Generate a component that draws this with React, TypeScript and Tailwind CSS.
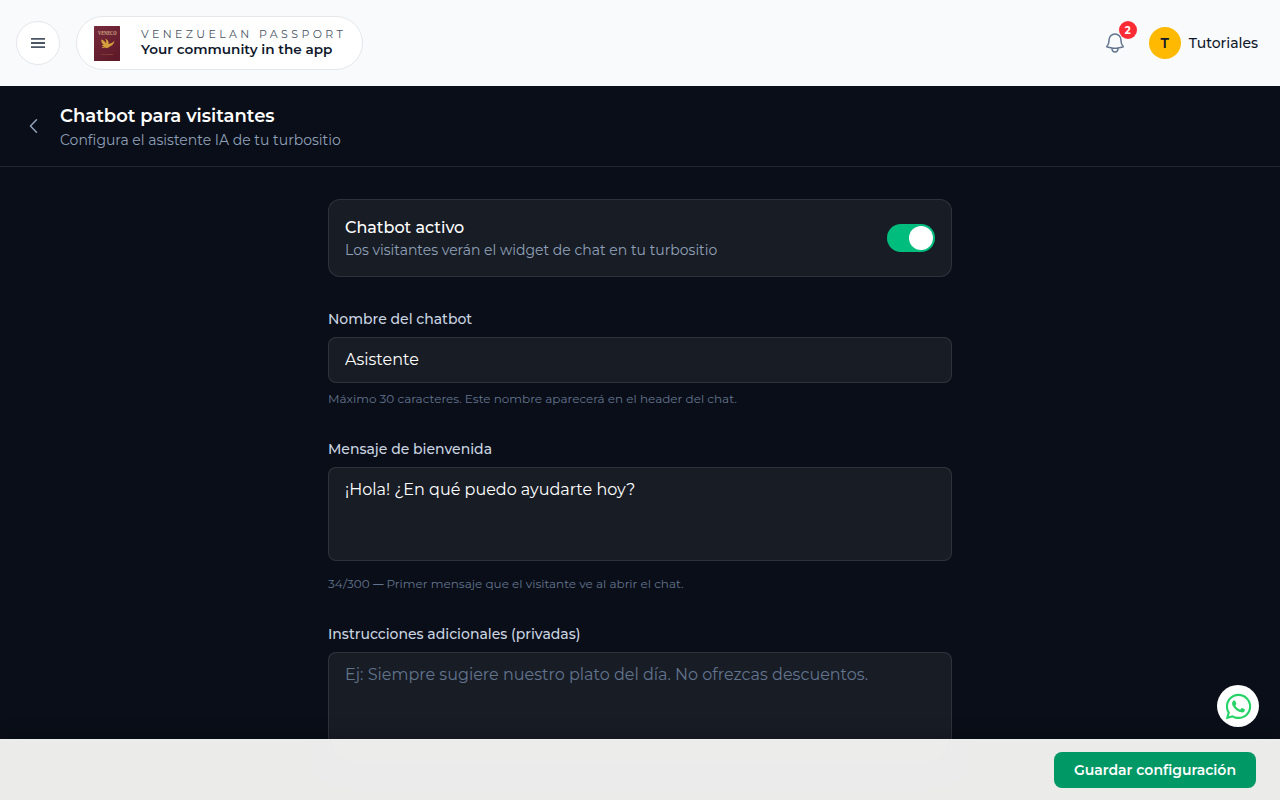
import React, { useState } from 'react';
import { FaWhatsapp } from 'react-icons/fa';

const inputClass =
  'block w-full rounded-lg border border-white/10 bg-white/[0.06] px-4 text-base text-white placeholder:text-slate-500 outline-none focus:border-emerald-500';

const PassportLogo: React.FC = () => (
  <svg viewBox="0 0 26 35" className="h-[35px] w-[26px]">
    <defs>
      <linearGradient id="cover" x1="0" y1="0" x2="0.6" y2="1">
        <stop offset="0" stopColor="#772b3d" />
        <stop offset="1" stopColor="#5f1a29" />
      </linearGradient>
    </defs>
    <rect width="26" height="35" rx="0.5" fill="url(#cover)" />
    <text x="13.3" y="8.6" textAnchor="middle" fontSize="5.4" fontWeight="700" textLength="18.5" lengthAdjust="spacingAndGlyphs" fill="#d4ad86" fontFamily="Liberation Serif, serif">
      VENECO
    </text>
    <path
      d="M7.2 13.4c2.300.5 4 1.900 4.800 4 .5-1.800.2-3.400-.8-5 2.600 1.200 3.800 3.100 3.400 5.600 2.200-.1 4.200-1.300 6-3.400-.6 3.100-2.400 5.200-5.200 6.100-1.200 1.200-2.800 1.500-4.800.9-1.300.4-2.400.4-3.200-.2 1.200-.2 2-.6 2.600-1.200-1.100-.1-1.900-.5-2.400-1.300h2.200c-1.700-1.300-2.600-3.100-2.600-5.500z"
      fill="#d5a03c"
    />
    <text x="13.2" y="29.3" textAnchor="middle" fontSize="2.8" fontWeight="700" textLength="12" lengthAdjust="spacingAndGlyphs" fill="#b07a45" fontFamily="Liberation Serif, serif">
      PASAPORTE
    </text>
  </svg>
);

const TopBar: React.FC = () => (
  <header className="flex h-[86px] shrink-0 items-center justify-between bg-[#f9fafc] pl-4 pr-[22px]">
    <div className="flex items-center gap-4">
      <button className="flex h-11 w-11 items-center justify-center rounded-full border border-gray-200 bg-white text-gray-600">
        <svg width="14" height="12" viewBox="0 0 14 12" stroke="currentColor" strokeWidth="1.9">
          <path d="M0 1.900h14M0 6h14M0 10.100h14" />
        </svg>
      </button>
      <div className="flex h-[54px] w-[287px] items-center gap-4 rounded-full border border-gray-200 bg-white pl-3">
        <div className="flex h-9 w-9 items-center justify-center">
          <PassportLogo />
        </div>
        <div className="flex flex-col whitespace-nowrap pb-0.5">
          <span className="text-[11px] leading-[15px] tracking-[3.4px] text-gray-600">VENEZUELAN PASSPORT</span>
          <span className="text-[13.6px] font-semibold leading-[15px] text-slate-900">Your community in the app</span>
        </div>
      </div>
    </div>

    <div className="flex items-center">
      <button className="relative mr-[22px] text-slate-500">
        <svg className="h-6 w-6" fill="none" viewBox="0 0 24 24" stroke="currentColor" strokeWidth="1.5" strokeLinecap="round" strokeLinejoin="round">
          <path d="M14.857 17.082a23.848 23.848 0 0 0 5.454-1.31A8.967 8.967 0 0 1 18 9.75V9A6 6 0 0 0 6 9v.75a8.967 8.967 0 0 1-2.312 6.022c1.733.64 3.56 1.085 5.455 1.31m5.714 0a24.255 24.255 0 0 1-5.714 0m5.714 0a3 3 0 1 1-5.714 0" />
        </svg>
        <span className="absolute -right-2.5 -top-2.5 flex h-[18px] w-[18px] items-center justify-center rounded-full bg-red-500 pt-px text-[10px] font-bold leading-none text-white">
          2
        </span>
      </button>
      <div className="flex h-8 w-8 items-center justify-center rounded-full bg-amber-400 text-sm font-semibold text-slate-900">T</div>
      <span className="ml-2 text-sm font-medium text-slate-900">Tutoriales</span>
    </div>
  </header>
);

const App: React.FC = () => {
  const [active, setActive] = useState(true);
  const [name, setName] = useState('Asistente');
  const [welcome, setWelcome] = useState('¡Hola! ¿En qué puedo ayudarte hoy?');
  const [instructions, setInstructions] = useState('');

  return (
    <div className="flex h-screen flex-col overflow-hidden bg-[#0a0e18] font-['Montserrat','Inter',sans-serif]">
      <TopBar />

      <div className="flex shrink-0 items-center gap-4 border-b border-white/10 px-6 py-4">
        <button className="text-slate-400">
          <svg className="h-5 w-5" fill="none" viewBox="0 0 24 24" stroke="currentColor" strokeWidth="1.8" strokeLinecap="round" strokeLinejoin="round">
            <path d="M15 19.5 7.75 12l7.25-7.5" />
          </svg>
        </button>
        <div>
          <h1 className="text-lg font-semibold text-white">Chatbot para visitantes</h1>
          <p className="text-sm text-slate-400">Configura el asistente IA de tu turbositio</p>
        </div>
      </div>

      <main className="mx-auto w-full max-w-2xl space-y-8 px-6 pt-8">
        <div className="flex items-center justify-between rounded-xl border border-white/10 bg-white/[0.06] p-4">
          <div>
            <p className="text-base font-medium text-white">Chatbot activo</p>
            <p className="text-sm text-slate-400">Los visitantes verán el widget de chat en tu turbositio</p>
          </div>
          <button
            onClick={() => setActive(!active)}
            className={`flex h-7 w-12 items-center rounded-full px-0.5 ${active ? 'justify-end bg-emerald-500' : 'justify-start bg-slate-600'}`}
          >
            <span className="h-6 w-6 rounded-full bg-white" />
          </button>
        </div>

        <div>
          <label className="mb-2 block text-sm font-medium text-slate-300">Nombre del chatbot</label>
          <input className={`${inputClass} h-[46px] pb-[11px] pt-[9px]`} maxLength={30} value={name} onChange={(e) => setName(e.target.value)} />
          <p className="mt-2 text-xs text-slate-500">Máximo 30 caracteres. Este nombre aparecerá en el header del chat.</p>
        </div>

        <div>
          <label className="mb-2 block text-sm font-medium text-slate-300">Mensaje de bienvenida</label>
          <textarea className={`${inputClass} resize-none py-2.5`} rows={3} maxLength={300} value={welcome} onChange={(e) => setWelcome(e.target.value)} />
          <p className="mt-[15px] text-xs text-slate-500">
            {welcome.length}/300 <span className="text-[10.5px] font-semibold">—</span> Primer mensaje que el visitante ve al abrir el chat.
          </p>
        </div>

        <div>
          <label className="mb-2 block text-sm font-medium text-slate-300">Instrucciones adicionales (privadas)</label>
          <textarea
            className={`${inputClass} resize-none py-2.5`}
            rows={4}
            value={instructions}
            onChange={(e) => setInstructions(e.target.value)}
            placeholder="Ej: Siempre sugiere nuestro plato del día. No ofrezcas descuentos."
          />
        </div>
      </main>

      <a className="fixed bottom-[73px] right-[21px] flex h-[42px] w-[42px] items-center justify-center rounded-full bg-white pl-px text-[#25d366]">
        <FaWhatsapp className="h-[29px] w-[29px]" />
      </a>

      <div className="fixed inset-x-0 bottom-0 flex justify-end border-t border-white/10 bg-[#fffefd]/[0.92] px-6 py-3 shadow-[0_-4px_16px_rgba(0,0,0,0.2)] backdrop-blur-md">
        <button className="h-9 rounded-lg bg-emerald-600 px-5 text-sm font-semibold text-white">Guardar configuración</button>
      </div>
    </div>
  );
};

export default App;
